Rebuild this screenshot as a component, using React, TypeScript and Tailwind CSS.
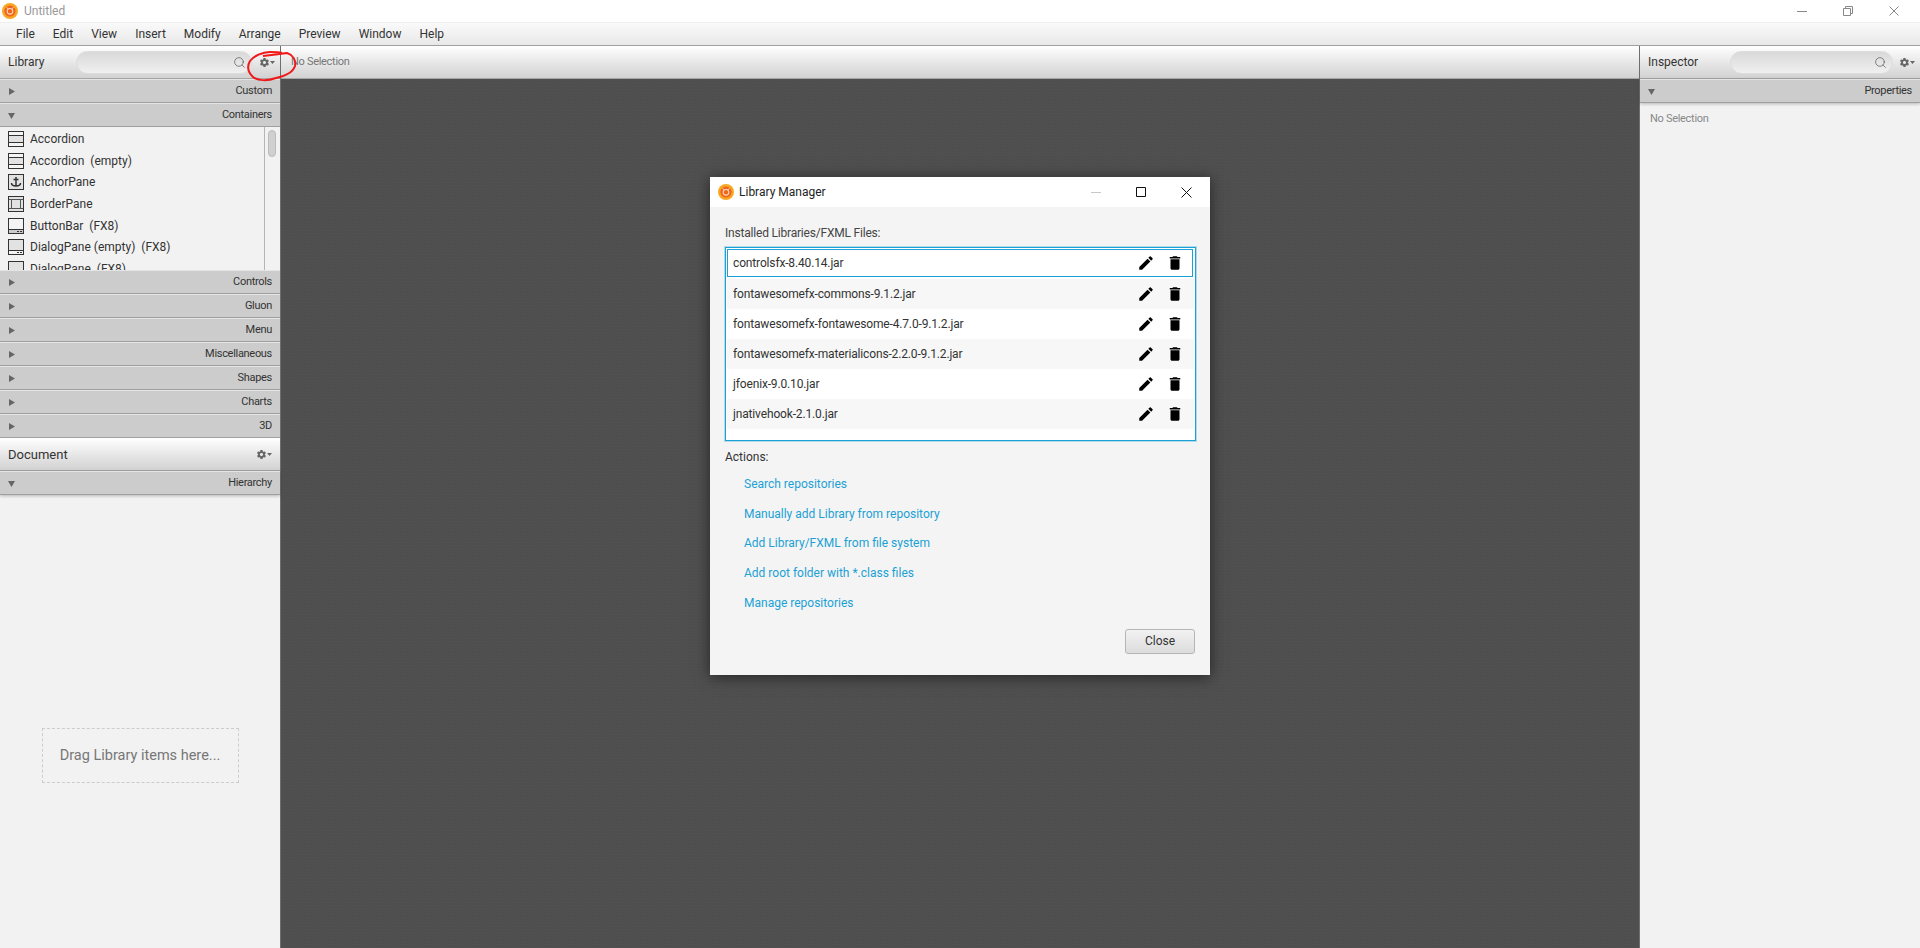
import React from "react";
import { Search } from "lucide-react";
import { MdEdit, MdDelete } from "react-icons/md";
import { IoMdSettings } from "react-icons/io";

const menus = ["File", "Edit", "View", "Insert", "Modify", "Arrange", "Preview", "Window", "Help"];
const libraryItems = [
  { label: "Accordion", icon: "accordion" },
  { label: "Accordion  (empty)", icon: "accordion" },
  { label: "AnchorPane", icon: "anchor" },
  { label: "BorderPane", icon: "border" },
  { label: "ButtonBar  (FX8)", icon: "bar" },
  { label: "DialogPane (empty)  (FX8)", icon: "dialog" },
  { label: "DialogPane  (FX8)", icon: "dialog" },
];
const sectionsBelow = ["Controls", "Gluon", "Menu", "Miscellaneous", "Shapes", "Charts", "3D"];
const jars = [
  "controlsfx-8.40.14.jar",
  "fontawesomefx-commons-9.1.2.jar",
  "fontawesomefx-fontawesome-4.7.0-9.1.2.jar",
  "fontawesomefx-materialicons-2.2.0-9.1.2.jar",
  "jfoenix-9.0.10.jar",
  "jnativehook-2.1.0.jar",
];
const actions = [
  "Search repositories",
  "Manually add Library from repository",
  "Add Library/FXML from file system",
  "Add root folder with *.class files",
  "Manage repositories",
];

const Logo = ({ size }: { size: number }) => (
  <svg width={size} height={size} viewBox="0 0 16 16" className="shrink-0">
    <circle cx="8" cy="8" r="8" fill="#f7a823" />
    <circle cx="8" cy="8" r="5.6" fill="#f0641e" />
    <circle cx="8" cy="8.3" r="2.8" fill="none" stroke="#fcd9b8" strokeWidth="1.1" />
    <path d="M4.5 4.5 6.5 6M11.5 4.5 9.5 6" stroke="#fcd9b8" strokeWidth="1" />
  </svg>
);

const Gear = () => (
  <div className="flex items-center text-[#666666]">
    <IoMdSettings size={11} />
    <svg width="5" height="3" viewBox="0 0 5 3">
      <path d="M0 0h5L2.5 3z" fill="#666666" />
    </svg>
  </div>
);

const SearchField = ({ className }: { className: string }) => (
  <div className={`flex h-[23px] items-center justify-end rounded-full border border-[#dcdcdc] bg-gradient-to-b from-[#d9d9d9] to-[#f0f0f0] pr-[5px] ${className}`}>
    <Search size={13} strokeWidth={1.3} className="text-[#555555]" />
  </div>
);

const Section = ({ title, open, shadow }: { title: string; open?: boolean; shadow?: boolean }) => (
  <div
    className={`relative flex h-[24px] shrink-0 items-center justify-between border-t border-t-[#e4e4e4] border-b border-b-[#a0a0a0] bg-[#cccccc] px-[8px] text-[#333333] ${
      shadow ? "shadow-[0_1px_3px_rgba(0,0,0,0.25)]" : ""
    }`}
  >
    <svg width="7" height="7" viewBox="0 0 7 7">
      {open ? <path d="M0 1h7L3.5 7z" fill="#666666" /> : <path d="M1 0l6 3.5L1 7z" fill="#666666" />}
    </svg>
    <span className="text-[11px] tracking-[-0.3px]">{title}</span>
  </div>
);

const ItemIcon = ({ kind }: { kind: string }) => (
  <svg width="16" height="16" viewBox="0 0 16 16" className="shrink-0">
    <rect x="0.5" y="0.5" width="15" height="15" fill={kind === "bar" ? "#f4f4f4" : "#e2e2e2"} stroke="#333333" />
    {kind === "accordion" && <path d="M1 1h14v3H1zM1 12h14v3H1z" fill="#f4f4f4" />}
    {kind === "accordion" && <path d="M1 4.5h14M1 11.5h14" stroke="#333333" fill="none" />}
    {kind === "anchor" && <path d="M8 3v9M5.5 5.5h5M3.5 9c0 2 2 3 4.5 3s4.5-1 4.5-3" stroke="#333333" strokeWidth="1.5" fill="none" />}
    {kind === "border" && <path d="M1 3.5h14M1 12.5h14M3.5 3.5v9M12.5 3.5v9" stroke="#555555" fill="none" />}
    {(kind === "bar" || kind === "dialog") && <path d="M1 12h14v3H1z" fill={kind === "bar" ? "#cccccc" : "#f4f4f4"} />}
    {(kind === "bar" || kind === "dialog") && <path d="M0.5 11.5h15" stroke="#333333" />}
    {(kind === "bar" || kind === "dialog") && <path d="M9 13.5h2M12 13.5h2" stroke="#333333" />}
  </svg>
);

const PanelBar = ({ children }: { children: React.ReactNode }) => (
  <div className="relative flex h-[33px] shrink-0 items-center border-b border-b-[#a6a6a6] bg-gradient-to-b from-[#ffffff] to-[#d2d2d2]">
    {children}
  </div>
);

export default function App() {
  return (
    <div className="relative flex h-[948px] w-[1920px] flex-col overflow-hidden bg-white font-['Roboto',sans-serif] text-[12px] text-[#333333]">
      {/* Title bar */}
      <div className="flex h-[22px] shrink-0 items-center bg-white pl-[2px]">
        <Logo size={16} />
        <span className="ml-[6px] text-[#999999]">Untitled</span>
        <div className="ml-auto flex items-center gap-[36px] pr-[21px]">
          <svg width="10" height="10" viewBox="0 0 10 10">
            <path d="M0 5.5h10" stroke="#888888" />
          </svg>
          <svg width="10" height="10" viewBox="0 0 10 10" fill="none">
            <path d="M0.5 2.5h7v7h-7zM2.5 2.5v-2h7v7h-2" stroke="#888888" />
          </svg>
          <svg width="10" height="10" viewBox="0 0 10 10" fill="none">
            <path d="M0.5 0.5l9 9M9.5 0.5l-9 9" stroke="#888888" />
          </svg>
        </div>
      </div>

      {/* Menu bar */}
      <div className="flex h-[24px] shrink-0 items-center gap-[18px] border-t border-t-[#eeeeee] border-b border-b-[#a0a0a0] bg-gradient-to-b from-[#fafafa] to-[#e8e8e8] pl-[16px] text-[#333333]">
        {menus.map(m => (
          <span key={m}>{m}</span>
        ))}
      </div>

      <div className="flex min-h-0 flex-1">
        {/* Left column */}
        <div className="flex w-[281px] shrink-0 flex-col border-r border-r-[#6e6e6e] bg-[#f2f2f2]">
          <PanelBar>
            <span className="ml-[8px] w-[68px]">Library</span>
            <SearchField className="w-[176px]" />
            <div className="ml-[7px]">
              <Gear />
            </div>
          </PanelBar>
          <Section title="Custom" />
          <Section title="Containers" open />
          <div className="flex h-[143px] shrink-0 overflow-hidden">
            <div className="flex-1 overflow-hidden border-r border-r-[#b5b5b5] pt-[1px]">
              {libraryItems.map(item => (
                <div key={item.label} className="flex h-[21.7px] items-center gap-[6px] pl-[8px] whitespace-pre">
                  <ItemIcon kind={item.icon} />
                  <span>{item.label}</span>
                </div>
              ))}
            </div>
            <div className="w-[15px] shrink-0 pt-[3px] pl-[3px]">
              <div className="h-[27px] w-[8px] rounded-full border border-[#bbbbbb] bg-[#d0d0d0]" />
            </div>
          </div>
          {sectionsBelow.map(s => (
            <Section key={s} title={s} />
          ))}
          <PanelBar>
            <span className="ml-[8px] flex-1 pt-[1px] text-[13px]">Document</span>
            <div className="mr-[8px]">
              <Gear />
            </div>
          </PanelBar>
          <Section title="Hierarchy" open shadow />
          <div className="flex flex-1 items-start justify-center pt-[233px]">
            <div className="flex h-[55px] w-[197px] items-center justify-center border border-dashed border-[#cccccc] text-[14.5px] text-[#777777]">
              Drag Library items here...
            </div>
          </div>
        </div>

        {/* Canvas */}
        <div className="flex min-w-0 flex-1 flex-col bg-[#505050]">
          <PanelBar>
            <span className="ml-[10px] text-[11px] tracking-[-0.3px] text-[#777777]">No Selection</span>
          </PanelBar>
          <div className="flex-1 bg-[linear-gradient(45deg,#4c4c4c_25%,transparent_25%,transparent_75%,#4c4c4c_75%)] bg-[length:3px_3px]" />
        </div>

        {/* Inspector */}
        <div className="flex w-[281px] shrink-0 flex-col border-l border-l-[#6e6e6e] bg-[#f2f2f2]">
          <PanelBar>
            <span className="ml-[8px] w-[82px]">Inspector</span>
            <SearchField className="w-[163px]" />
            <div className="ml-[6px]">
              <Gear />
            </div>
          </PanelBar>
          <Section title="Properties" open shadow />
          <div className="pt-[8px] pl-[10px] text-[11px] tracking-[-0.3px] text-[#888888]">No Selection</div>
        </div>
      </div>

      {/* Library Manager dialog */}
      <div className="absolute top-[177px] left-[710px] flex h-[498px] w-[500px] flex-col bg-[#f4f4f4] shadow-[0_2px_14px_rgba(0,0,0,0.55)]">
        <div className="flex h-[30px] shrink-0 items-center bg-white pl-[8px] text-[#222222]">
          <Logo size={16} />
          <span className="ml-[5px]">Library Manager</span>
          <div className="ml-auto flex items-center gap-[35px] pr-[18px]">
            <svg width="10" height="10" viewBox="0 0 10 10">
              <path d="M0 5.5h10" stroke="#c8c8c8" />
            </svg>
            <svg width="10" height="10" viewBox="0 0 10 10" fill="none">
              <path d="M0.5 0.5h9v9h-9z" stroke="#111111" />
            </svg>
            <svg width="11" height="11" viewBox="0 0 11 11" fill="none">
              <path d="M0.5 0.5l10 10M10.5 0.5l-10 10" stroke="#111111" />
            </svg>
          </div>
        </div>
        <div className="flex flex-1 flex-col px-[15px]">
          <div className="mt-[17px] tracking-[-0.2px] text-[#444444]">Installed Libraries/FXML Files:</div>
          <div className="mt-[5px] h-[194px] w-[471px] shrink-0 border border-[#1ba1d5] bg-white p-[1px] shadow-[0_0_0_1px_rgba(27,161,213,0.3)]">
            {jars.map((jar, i) => (
              <div
                key={jar}
                className={`flex items-center ${
                  i === 0
                    ? "mr-[1px] mb-[2px] h-[28px] border border-[#1ba1d5] pr-[8px] pl-[5px]"
                    : i % 2 === 1
                      ? "h-[30px] bg-[#f7f7f7] pr-[10px] pl-[6px]"
                      : "h-[30px] bg-white pr-[10px] pl-[6px]"
                }`}
              >
                <span className="flex-1 tracking-[-0.15px]">{jar}</span>
                <MdEdit size={18} className="text-black" />
                <MdDelete size={18} className="ml-[11px] text-black" />
              </div>
            ))}
          </div>
          <div className="mt-[7px]">Actions:</div>
          <div className="mt-[3px] flex flex-col pl-[19px] text-[#1ba1d5]">
            {actions.map(a => (
              <div key={a} className="flex h-[29.8px] items-center">
                {a}
              </div>
            ))}
          </div>
          <div className="mt-[11px] flex justify-end">
            <div className="flex h-[25px] w-[70px] items-center justify-center rounded-[3px] border border-[#b5b5b5] bg-gradient-to-b from-[#f2f2f2] to-[#dcdcdc] text-[#333333]">
              Close
            </div>
          </div>
        </div>
      </div>

      {/* Red marker scribble over the gear button */}
      <svg className="absolute top-0 left-0" width="320" height="100" viewBox="0 0 320 100" fill="none">
        <path
          d="M263 56C272 55 280 54 287 53C293 55 296 60 295 66C293 73 285 76 276 78C268 81 258 81 253 77C248 72 247 66 250 61C254 56 262 52 270 52C274 52 278 52 282 53"
          stroke="#f01818"
          strokeWidth="2"
        />
      </svg>
    </div>
  );
}
